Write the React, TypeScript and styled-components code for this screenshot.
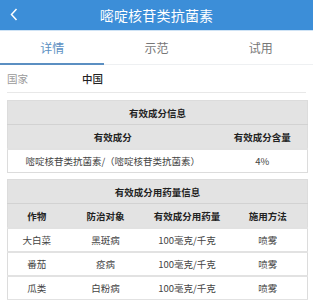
import styled, { createGlobalStyle } from 'styled-components';

const GlobalStyle = createGlobalStyle`
  html, body {
    margin: 0;
    padding: 0;
    background: #fff;
    font-family: "Noto Sans CJK SC", "Noto Sans", sans-serif;
  }
`;

interface IDosage {
  crop: string;
  target: string;
  amount: string;
  method: string;
}

const dosages: IDosage[] = [
  { crop: '大白菜', target: '黑斑病', amount: '100毫克/千克', method: '喷雾' },
  { crop: '番茄', target: '疫病', amount: '100毫克/千克', method: '喷雾' },
  { crop: '瓜类', target: '白粉病', amount: '100毫克/千克', method: '喷雾' },
  { crop: '', target: '', amount: '', method: '' },
];

const tabs = ['详情', '示范', '试用'];

function App() {
  return (
    <Page>
      <GlobalStyle />
      <Header>
        <Back width='8' height='13' viewBox='0 0 8 13'>
          <path d='M6.5 1 L1.5 6.5 L6.5 12' fill='none' stroke='#fff' strokeWidth='1.5' />
        </Back>
        <HeaderTitle>嘧啶核苷类抗菌素</HeaderTitle>
      </Header>
      <Tabs>
        {tabs.map((t, i) => (
          <Tab key={t} active={i === 0}>
            {t}
          </Tab>
        ))}
      </Tabs>
      <InfoRow>
        <Label>国家</Label>
        <Value>中国</Value>
      </InfoRow>

      <Table>
        <colgroup>
          <col style={{ width: 210 }} />
          <col style={{ width: 90 }} />
        </colgroup>
        <thead>
          <tr>
            <Caption colSpan={2}>有效成分信息</Caption>
          </tr>
          <tr>
            <Th>有效成分</Th>
            <Th>有效成分含量</Th>
          </tr>
        </thead>
        <tbody>
          <tr>
            <Td>嘧啶核苷类抗菌素/（嘧啶核苷类抗菌素）</Td>
            <Td>4%</Td>
          </tr>
        </tbody>
      </Table>

      <Table>
        <colgroup>
          <col style={{ width: 58 }} />
          <col style={{ width: 80 }} />
          <col style={{ width: 83 }} />
          <col style={{ width: 79 }} />
        </colgroup>
        <thead>
          <tr>
            <Caption colSpan={4}>有效成分用药量信息</Caption>
          </tr>
          <tr>
            <Th>作物</Th>
            <Th>防治对象</Th>
            <Th>有效成分用药量</Th>
            <Th>施用方法</Th>
          </tr>
        </thead>
        <tbody>
          {dosages.map((d, i) => (
            <tr key={i}>
              <Td>{d.crop}</Td>
              <Td>{d.target}</Td>
              <Td>{d.amount}</Td>
              <Td>{d.method}</Td>
            </tr>
          ))}
        </tbody>
      </Table>
    </Page>
  );
}

const Page = styled.div`
  width: 313px;
  height: 300px;
  overflow: hidden;
  background: #fff;
`;

const Header = styled.div`
  position: relative;
  height: 30px;
  background: #3c8ed8;
  border-bottom: 1px solid #cfe3f5;
  display: flex;
  align-items: center;
  justify-content: center;
`;

const Back = styled.svg`
  position: absolute;
  left: 10px;
  top: 8px;
`;

const HeaderTitle = styled.div`
  color: #fff;
  font-size: 14px;
  font-weight: 400;
  letter-spacing: 0.2px;
`;

const Tabs = styled.div`
  display: flex;
  height: 34px;
  border-bottom: 1px solid #eef0f2;
  box-sizing: border-box;
`;

interface TabProps {
  active?: boolean;
}

const Tab = styled.div<TabProps>`
  flex: 1;
  display: flex;
  align-items: center;
  justify-content: center;
  font-size: 12px;
  color: ${(props) => (props.active ? '#5b8fc2' : '#777')};
  border-bottom: 2px solid ${(props) => (props.active ? '#5b8fc2' : 'transparent')};
  margin-bottom: -1px;
`;

const InfoRow = styled.div`
  display: flex;
  align-items: center;
  height: 27px;
  margin: 0 7px;
  border-bottom: 1px solid #e8e8e8;
  font-size: 10.5px;
`;

const Label = styled.span`
  width: 75px;
  color: #9a9a9a;
`;

const Value = styled.span`
  color: #222;
  font-weight: 500;
`;

const Table = styled.table`
  width: 300px;
  margin: 7px 0 0 7px;
  border-collapse: collapse;
  table-layout: fixed;
  border: 1px solid #dcdcdc;
  font-size: 9.5px;
  text-align: center;
  & + & {
    margin-top: 6px;
  }
`;

const Caption = styled.th`
  height: 23px;
  padding: 0;
  background: #e3e3e3;
  color: #222;
  font-weight: 700;
  border-bottom: 1px solid #d2d2d2;
`;

const Th = styled.th`
  height: 23px;
  padding: 0;
  background: #e3e3e3;
  color: #222;
  font-weight: 700;
`;

const Td = styled.td`
  height: 22px;
  padding: 0;
  color: #444;
  background: #fff;
  border-top: 2px solid #e2e2e2;
  white-space: nowrap;
`;

export default App;
